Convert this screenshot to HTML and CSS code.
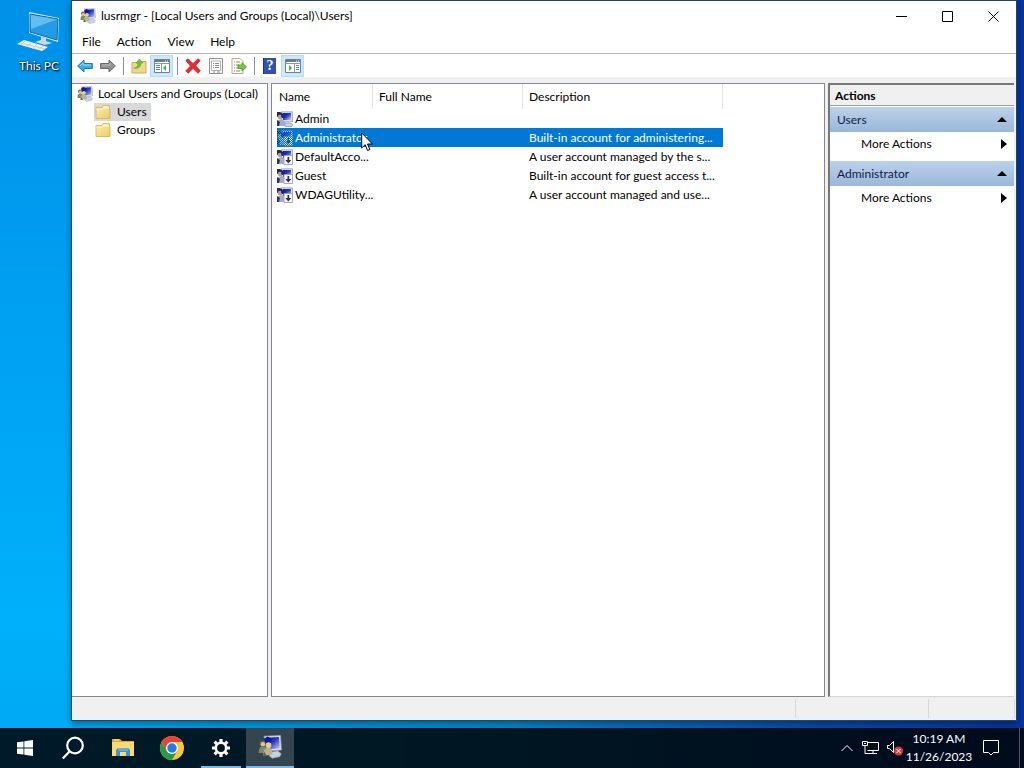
FILE: index.html
```html
<!DOCTYPE html>
<html lang="en">
<head>
    <meta charset="UTF-8">
    <meta name="viewport" content="width=device-width, initial-scale=1.0">
    <title>lusrmgr - [Local Users and Groups (Local)\Users]</title>
    <link rel="stylesheet" href="styles.css">
</head>
<body>
    <!-- shared icons -->
    <svg class="sprite" aria-hidden="true">
        <linearGradient id="screenBlue" x1="0" y1="0" x2="1" y2="1">
            <stop offset="0" stop-color="#0713a8"/>
            <stop offset="0.45" stop-color="#2638b8"/>
            <stop offset="1" stop-color="#c9d5f6"/>
        </linearGradient>
        <linearGradient id="folderFill" x1="0" y1="0" x2="1" y2="1">
            <stop offset="0" stop-color="#fff0ae"/>
            <stop offset="1" stop-color="#edc964"/>
        </linearGradient>
        <pattern id="dither" width="2" height="2" patternUnits="userSpaceOnUse">
            <path d="M0 0h1v1H0zM1 1h1v1H1z" fill="#0078d7"/>
        </pattern>
        <symbol id="users" viewBox="0 0 16 16">
            <path d="M4 .8l11-.4.600 9.600-8.600.6z" fill="#dfe2ee" stroke="#a0a5b8" stroke-width=".5"/>
            <path d="M5 1.800l9-.5.600 7.500-7.600.8z" fill="url(#screenBlue)"/>
            <path d="M8.500 11.500l4.500-1 2.500 2-1 2-5 1-2-1.500z" fill="#c7d3e2" stroke="#8f9bb0" stroke-width=".4"/>
            <path d="M4 2.500L6.500 1 9 2.500 8.500 6H5z" fill="#1119a0"/>
            <circle cx="3" cy="5.500" r="1.900" fill="#6b6440"/>
            <circle cx="3.300" cy="6.200" r="1.500" fill="#dcc592"/>
            <path d="M.5 12c0-3.500 1-4.500 3-4.500s3 1.500 3 4.500z" fill="#7f8a62"/>
            <circle cx="7" cy="6.800" r="1.900" fill="#e3cc98"/>
            <path d="M3.500 14c0-4 1.200-5.500 3.500-5.500 2 0 2.800 1.800 2.500 4.500z" fill="#b9b489"/>
            <path d="M4 11l2 3H3.500z" fill="#59617b"/>
        </symbol>
        <symbol id="user" viewBox="0 0 16 16">
            <path d="M4.500.8H15.500v10h-11z" fill="#dcdff0" stroke="#8c91aa" stroke-width=".7"/>
            <path d="M6 2h8v7H6z" fill="url(#screenBlue)"/>
            <path d="M8 12h5l3 1.500-1 2H8z" fill="#cbd3e6" stroke="#7e86a0" stroke-width=".6"/>
            <path d="M0 1h3l2 1 2 2-1 3-2-2-4 1z" fill="#252755"/>
            <circle cx="3" cy="6" r="2.300" fill="#b5a27f"/>
            <circle cx="6" cy="5" r="2" fill="#1b2494"/>
            <path d="M0 15v-4c1-3 6-4 8 0v4z" fill="#a6abc9"/>
            <path d="M0 9l3 2-1 4H0z" fill="#32354d"/>
        </symbol>
        <symbol id="user-disabled" viewBox="0 0 16 16">
            <use href="#user"/>
            <path d="M7 6.500h8.500v9H7z" fill="#f8f8fc" stroke="#9a9cb4" stroke-width=".8"/>
            <path d="M10.500 8h1.700v3h2.100l-3 3.500-3-3.500h2.200z" fill="#303050"/>
        </symbol>
        <symbol id="folder" viewBox="0 0 16 16">
            <path d="M1 3.500h6l1-2h6.500v3.500H15v9.500H1z" fill="url(#folderFill)" stroke="#d4ae55" stroke-width=".8"/>
            <path d="M8 3.200h5.500" stroke="#fffbe0"/>
            <path d="M1.500 5.200h6l1-1h6" stroke="#fff9d7" stroke-width=".7" fill="none"/>
        </symbol>
    </svg>

    <div class="desktop">
        <main class="workspace">
            <div class="shortcuts">
                <a class="shortcut" href="#">
                    <svg width="44" height="44" viewBox="0 0 44 44" aria-hidden="true">
                        <path d="M12 3l30 6-1 24-29-9z" fill="#d5eefb"/>
                        <path d="M13 5l28 5-1 21-27-8z" fill="#249be6"/>
                        <path d="M13 5l28 5-27 10z" fill="#64bdf1"/>
                        <path d="M13 5l28 5-1 21-27-8z" fill="none" stroke="#17648f"/>
                        <path d="M24 28l5 1v3l6 2-7 2-10-3 6-2z" fill="#cbd8df"/>
                        <path d="M7 31l24 7-6 4L0 35z" fill="#eef2f4"/>
                        <path d="M4 34l24 6M8 32l-4 4M14 34l-5 4M20 35l-5 5M26 37l-5 4" stroke="#bac5cc" stroke-width=".8"/>
                    </svg>
                    <span>This PC</span>
                </a>
            </div>

            <section class="window">
                <header class="titlebar">
                    <svg class="icon" aria-hidden="true"><use href="#users"/></svg>
                    <h1>lusrmgr - [Local Users and Groups (Local)\Users]</h1>
                    <div class="caption-buttons">
                        <button aria-label="Minimize"><svg width="11" height="11"><path d="M0 5.500h11"/></svg></button>
                        <button aria-label="Maximize"><svg width="11" height="11"><path d="M.5.5h10v10H.5z"/></svg></button>
                        <button aria-label="Close"><svg width="11" height="11"><path d="M.5.5l10 10M10.500.5l-10 10"/></svg></button>
                    </div>
                </header>

                <nav class="menubar">
                    <button>File</button>
                    <button>Action</button>
                    <button>View</button>
                    <button>Help</button>
                </nav>

                <div class="toolbar">
                    <button aria-label="Back">
                        <svg class="icon" viewBox="0 0 16 16"><path d="M.6 8L7 2v3.500h8.400v5H7V14z" fill="#35aee6" stroke="#247bab"/><path d="M3 8l3-3v2h8" fill="none" stroke="#9bdcf8"/></svg>
                    </button>
                    <button aria-label="Forward">
                        <svg class="icon" viewBox="0 0 16 16"><path d="M15.400 8L9 2v3.500H.6v5H9V14z" fill="#929292" stroke="#686868"/><path d="M2 7h8V5" fill="none" stroke="#bdbdbd"/></svg>
                    </button>
                    <span class="separator"></span>
                    <button aria-label="Up one level">
                        <svg class="icon" viewBox="0 0 16 16"><path d="M1 4.500h8l1-1h5v11.500H1z" fill="#edd98a" stroke="#c9ab58"/><path d="M3 10c3 0 4-2 4-5H5l3.500-4L12 5h-2c0 4-3 6-7 5z" fill="#6cc832" stroke="#549a32" stroke-width=".6"/></svg>
                    </button>
                    <button class="pressed" aria-label="Show/Hide Console Tree" aria-pressed="true">
                        <svg class="icon" viewBox="0 0 16 16"><path d="M.5 1.500h15v13H.5z" fill="#fff" stroke="#72808e"/><path d="M1 2h14v2H1z" fill="#687c91"/><path d="M.5 5.500h15M7.500 6v8" stroke="#8a98a5"/><path d="M2 7.500h4M2 9.500h4M2 11.500h4" stroke="#4888bb"/><path d="M12 7v6L9 10z" fill="#55ac29"/><path d="M11 3h1M13 3h1" stroke="#fff"/></svg>
                    </button>
                    <span class="separator"></span>
                    <button aria-label="Delete">
                        <svg class="icon" viewBox="0 0 16 16"><path d="M.8 2.500L3 .8 8 5.500l5-4.700 2.200 1.700-4.600 5.300 4.700 5L13 15.300l-5-4.700-4.800 4.600L.7 13l4.700-5z" fill="#e42c31" stroke="#b22127" stroke-width=".7"/></svg>
                    </button>
                    <button aria-label="Properties">
                        <svg class="icon" viewBox="0 0 16 16"><path d="M1.500.5h13v15h-13z" fill="#f8f8f8" stroke="#909090"/><path d="M3.500 3h9v9.500h-9z" fill="#fff" stroke="#b0b0b0"/><path d="M5 5.500h1M7 5.500h4M5 7.500h1M7 7.500h4M5 9.500h1M7 9.500h4M5 14h2M9 14h3" stroke="#888"/></svg>
                    </button>
                    <button aria-label="Export List">
                        <svg class="icon" viewBox="0 0 16 16"><path d="M1 .5h8l3 3v12H1z" fill="#fffdf0" stroke="#b0ae98"/><path d="M3 4h1M5 4h4M3 7h1M5 7h3M3 10h1M5 10h3M3 13h1M5 13h4" stroke="#888"/><path d="M7 7h4V4.500L15.500 9 11 13v-2.500H7z" fill="#76cc38" stroke="#4b962d" stroke-width=".8"/></svg>
                    </button>
                    <span class="separator"></span>
                    <button class="help" aria-label="Help"><span>?</span></button>
                    <button class="pressed" aria-label="Show/Hide Action Pane" aria-pressed="true">
                        <svg class="icon" viewBox="0 0 16 16"><path d="M.5 1.500h15v13H.5z" fill="#fff" stroke="#72808e"/><path d="M1 2h14v2H1z" fill="#687c91"/><path d="M.5 5.500h15M9.500 6v8" stroke="#8a98a5"/><path d="M11 7.500h3M11 9.500h3M11 11.500h3" stroke="#4888bb"/><path d="M4 7v6l3-3z" fill="#55ac29"/><path d="M11 3h1M13 3h1" stroke="#fff"/></svg>
                    </button>
                </div>

                <div class="panes">
                    <nav class="tree">
                        <a class="root" href="#"><svg class="icon" aria-hidden="true"><use href="#users"/></svg><span>Local Users and Groups (Local)</span></a>
                        <a class="child selected" href="#"><svg class="icon" aria-hidden="true"><use href="#folder"/></svg><span>Users</span></a>
                        <a class="child" href="#"><svg class="icon" aria-hidden="true"><use href="#folder"/></svg><span>Groups</span></a>
                    </nav>

                    <div class="list">
                        <table>
                            <colgroup><col class="col-name"><col class="col-full"><col class="col-desc"></colgroup>
                            <thead>
                                <tr><th>Name</th><th>Full Name</th><th>Description</th></tr>
                            </thead>
                            <tbody>
                                <tr>
                                    <td><div class="user"><svg class="icon" aria-hidden="true"><use href="#user"/></svg><span>Admin</span></div></td>
                                    <td></td><td></td>
                                </tr>
                                <tr class="selected">
                                    <td><div class="user"><svg class="icon" aria-hidden="true"><use href="#user-disabled"/><path d="M0 0h16v16H0z" fill="url(#dither)"/></svg><span>Administrator</span></div></td>
                                    <td></td><td>Built-in account for administering...</td>
                                </tr>
                                <tr>
                                    <td><div class="user"><svg class="icon" aria-hidden="true"><use href="#user-disabled"/></svg><span>DefaultAcco...</span></div></td>
                                    <td></td><td>A user account managed by the s...</td>
                                </tr>
                                <tr>
                                    <td><div class="user"><svg class="icon" aria-hidden="true"><use href="#user-disabled"/></svg><span>Guest</span></div></td>
                                    <td></td><td>Built-in account for guest access t...</td>
                                </tr>
                                <tr>
                                    <td><div class="user"><svg class="icon" aria-hidden="true"><use href="#user-disabled"/></svg><span>WDAGUtility...</span></div></td>
                                    <td></td><td>A user account managed and use...</td>
                                </tr>
                            </tbody>
                        </table>
                    </div>

                    <aside class="actions">
                        <h2>Actions</h2>
                        <div class="action-group">
                            <button class="group-title">Users<svg width="10" height="5"><path d="M0 5l5-5 5 5z"/></svg></button>
                            <button class="more">More Actions<svg width="6" height="10"><path d="M0 0l6 5-6 5z"/></svg></button>
                        </div>
                        <div class="action-group">
                            <button class="group-title">Administrator<svg width="10" height="5"><path d="M0 5l5-5 5 5z"/></svg></button>
                            <button class="more">More Actions<svg width="6" height="10"><path d="M0 0l6 5-6 5z"/></svg></button>
                        </div>
                    </aside>
                </div>

                <footer class="statusbar"><span></span><span></span><span></span></footer>
            </section>
        </main>

        <footer class="taskbar">
            <div class="apps">
                <button aria-label="Start">
                    <svg width="16" height="16" viewBox="0 0 16 16" fill="#fff"><path d="M0 2.300L6.500 1.400v6.200H0zM7.300 1.300L16 0v7.600H7.300zM0 8.400h6.500v6.200L0 13.700zM7.300 8.400H16V16l-8.700-1.300z"/></svg>
                </button>
                <button aria-label="Search">
                    <svg width="24" height="24" viewBox="0 0 24 24" fill="none" stroke="#fff" stroke-width="2.200"><circle cx="13" cy="9.500" r="7.800"/><path d="M7.500 15.500L.8 22.500"/></svg>
                </button>
                <button aria-label="File Explorer">
                    <svg width="22" height="20" viewBox="0 0 22 20"><path d="M0 1h8l2 2h12v15H0z" fill="#e8a91e"/><path d="M0 4h22v14H0z" fill="#ffd96f"/><path d="M2 2h5" stroke="#fff2b4"/><path d="M4 18v-6l2-2h10l2 2v6h-4v-4H8v4z" fill="#3793c9"/><path d="M6 10h10v3H6z" fill="#5bb1dd"/></svg>
                </button>
                <button aria-label="Google Chrome">
                    <svg width="24" height="24" viewBox="0 0 24 24"><circle cx="12" cy="12" r="12" fill="#fcc934"/><path d="M12 6h10.390A12 12 0 0 0 1.610 6l5.200 9z" fill="#ea4335"/><path d="M1.610 6A12 12 0 0 0 12 24l5.200-9L12 18l-5.200-3z" fill="#269b4b"/><circle cx="12" cy="12" r="6" fill="#fff"/><circle cx="12" cy="12" r="4.700" fill="#2878e8"/></svg>
                </button>
                <button class="running" aria-label="Settings">
                    <svg width="20" height="20" viewBox="0 0 20 20" fill="none" stroke="#fff"><circle cx="10" cy="10" r="5.200" stroke-width="2.600"/><path d="M10 1v3M10 16v3M1 10h3M16 10h3M3.640 3.640l2.120 2.120M14.240 14.240l2.120 2.120M3.640 16.360l2.120-2.120M14.240 5.760l2.120-2.120" stroke-width="3.200"/></svg>
                </button>
                <button class="active" aria-label="Local Users and Groups">
                    <svg width="24" height="24"><use href="#users"/></svg>
                </button>
            </div>
            <div class="tray">
                <button aria-label="Show hidden icons"><svg width="12" height="8"><path d="M.5 7L6 1.500 11.500 7"/></svg></button>
                <button aria-label="Network"><svg width="18" height="16"><path d="M5.500 2.500h11v8h-11M.5 1.500h5v4h-5zM3 5.500v8h8M11 10.500v3M7 13.500h8M2 3.500h2"/></svg></button>
                <button aria-label="Volume muted"><svg width="18" height="18"><path d="M1.500 6.500h2l4-4v11l-4-4h-2z"/><circle class="mute" cx="12.500" cy="12" r="4.500"/><path d="M10.500 10l4 4M14.500 10l-4 4"/></svg></button>
                <button class="clock"><time datetime="2023-11-26T10:19">10:19 AM<br>11/26/2023</time></button>
                <button class="notifications" aria-label="Notifications"><svg width="18" height="18"><path d="M1.500 1.500h15v12h-5L9 16l-2.500-2.500h-5z"/></svg></button>
                <button class="show-desktop" aria-label="Show desktop"></button>
            </div>
        </footer>

        <svg class="cursor" width="13" height="20" viewBox="0 0 13 20" aria-hidden="true"><path d="M.7 1v15l3.500-3.300 2.300 5.800 2.400-1-2.400-5.500h5z" fill="#fff" stroke="#000"/></svg>
    </div>
</body>
</html>
```
FILE: styles.css
```css
* {
    margin: 0;
    padding: 0;
    box-sizing: border-box;
}

body {
    font-family: 'Segoe UI', Lato, 'Open Sans', sans-serif;
    font-size: 12px;
    line-height: 18px;
    color: #000;
}

button {
    font: inherit;
    color: inherit;
    background: none;
    border: none;
}

a {
    color: inherit;
    text-decoration: none;
}

svg {
    display: block;
    flex: none;
}

.sprite {
    position: absolute;
    width: 0;
    height: 0;
}

.icon {
    width: 16px;
    height: 16px;
}

.desktop {
    position: relative;
    height: 100vh;
    display: flex;
    flex-direction: column;
    background: linear-gradient(90deg, #00a4f4 0%, #0098dc 20%, #0082c4 50%, #0648a4 80%, #05339b 100%);
    overflow: hidden;
}

.workspace {
    flex: 1;
    min-height: 0;
    display: flex;
    padding: 1px 8px 8px 0;
}

/* Desktop shortcuts */
.shortcuts {
    width: 72px;
    flex: none;
    margin: -1px 0 -8px;
    padding-top: 9px;
    background: linear-gradient(180deg, #0090e8 0%, #009bf0 30%, #00b0fa 85%, #00a9f3 100%);
}

.shortcut {
    display: flex;
    flex-direction: column;
    align-items: center;
    padding-left: 6px;
    gap: 4px;
    color: #fff;
    text-shadow: 1px 1px 2px #000, 0 0 2px #000;
}

/* Window */
.window {
    flex: 1;
    min-width: 0;
    display: flex;
    flex-direction: column;
    background: #f0f0f0;
    box-shadow: 0 0 0 1px #25465e, 0 2px 7px rgba(0, 0, 0, 0.45);
}

.titlebar {
    height: 30px;
    display: flex;
    align-items: center;
    gap: 5px;
    padding-left: 8px;
    background: #fff;
}

.titlebar h1 {
    flex: 1;
    font-size: 12px;
    font-weight: 400;
}

.caption-buttons {
    display: flex;
    height: 100%;
}

.caption-buttons button {
    width: 46px;
    display: flex;
    align-items: center;
    justify-content: center;
}

.caption-buttons svg {
    fill: none;
    stroke: #000;
}

.menubar {
    height: 22px;
    display: flex;
    padding-left: 2px;
    background: #fff;
}

.menubar button {
    padding: 0 8px;
}

.toolbar {
    display: flex;
    align-items: center;
    height: 24px;
    padding-left: 1px;
    background: #fff;
    border-top: 1px solid #b4b4b4;
}

.toolbar button {
    width: 23px;
    height: 22px;
    display: flex;
    align-items: center;
    justify-content: center;
    border: 1px solid transparent;
}

.toolbar .pressed {
    background: #cce8ff;
    border-color: #b5dcf8;
}

.separator {
    width: 8px;
    height: 18px;
    background: linear-gradient(#8c8c8c, #8c8c8c) center / 1px 100% no-repeat;
}

.help span {
    width: 13px;
    height: 16px;
    line-height: 16px;
    font-family: 'Liberation Serif', serif;
    font-size: 14px;
    font-weight: 700;
    color: #fff;
    background: #334faf;
    border-left: 1px solid #20337b;
}

/* Panes */
.panes {
    flex: 1;
    min-height: 0;
    display: grid;
    grid-template-columns: 196px 1fr 186px;
    gap: 3px;
    padding: 6px 2px 0 0;
}

.tree,
.list {
    background: #fff;
    border: 1px solid #828790;
}

.tree {
    display: flex;
    flex-direction: column;
    align-items: flex-start;
    padding-top: 1px;
    border-left: none;
    white-space: nowrap;
    overflow: hidden;
}

.tree a {
    display: flex;
    align-items: center;
    gap: 5px;
    padding-right: 4px;
}

.tree .root {
    margin-left: 5px;
}

.tree .child {
    margin-left: 22px;
    padding-left: 1px;
    gap: 6px;
}

.tree .selected {
    background: #d9d9d9;
}

.list {
    overflow: hidden;
}

table {
    table-layout: fixed;
    width: 451px;
    border-spacing: 0;
}

.col-name {
    width: 101px;
}

.col-full {
    width: 150px;
}

.col-desc {
    width: 200px;
}

th {
    height: 25px;
    padding: 0 6px;
    text-align: left;
    font-weight: 400;
    border-right: 1px solid #e5e5e5;
}

th:first-child {
    padding-left: 7px;
}

td {
    height: 19px;
    padding: 0 0 0 6px;
    white-space: nowrap;
    overflow: hidden;
}

td:first-child {
    padding-left: 5px;
}

.user {
    display: flex;
    align-items: center;
    gap: 2px;
}

.list .selected td {
    color: #fff;
    background: #0078d7;
}

.list .selected td:first-child {
    background: linear-gradient(90deg, #fff 5px, #0078d7 5px);
}

/* Actions pane */
.actions {
    background: #fff;
    border: 2px solid #777;
    border-right: none;
    border-bottom: 1px solid #d5d5d5;
}

.actions h2 {
    height: 21px;
    padding-left: 5px;
    line-height: 21px;
    font-size: 12px;
    font-weight: 700;
    background: #f0f0f0;
    border-bottom: 1px solid #a0a0a0;
}

.action-group {
    padding: 1px 0 4px;
}

.action-group button {
    width: 100%;
    display: flex;
    align-items: center;
    justify-content: space-between;
    height: 25px;
    padding: 0 7px;
}

.action-group .group-title {
    color: #0a1e46;
    background: linear-gradient(#bcd2ec, #9bb7d8);
}

.action-group .more {
    height: 24px;
    padding-left: 31px;
}

.action-group svg {
    fill: #000;
}

.statusbar {
    height: 23px;
    display: grid;
    grid-template-columns: 1fr 133px 86px;
    padding: 2px 1px 2px 0;
}

.statusbar span {
    border-right: 1px solid #d7d7d7;
}

/* Taskbar */
.taskbar {
    position: relative;
    height: 40px;
    display: flex;
    justify-content: space-between;
    color: #fff;
    background: linear-gradient(90deg, #001a29 0%, #001622 50%, #000a1d 100%);
}

.apps {
    display: flex;
    gap: 1px;
    padding-left: 1px;
}

.apps button {
    width: 48px;
    display: flex;
    align-items: center;
    justify-content: center;
}

.apps .running {
    background: linear-gradient(#76b9ed, #76b9ed) bottom / 40px 2px no-repeat;
}

.apps .active {
    background: #34454f;
    border-bottom: 2px solid #76b9ed;
}

.tray {
    display: flex;
}

.tray button {
    width: 24px;
    display: flex;
    align-items: center;
    justify-content: center;
}

.tray svg {
    fill: none;
    stroke: #fff;
}

.tray .mute {
    fill: #d83b3b;
    stroke: none;
}

.tray .clock {
    width: 64px;
    text-align: center;
}

.tray .notifications {
    width: 40px;
}

.tray .show-desktop {
    width: 5px;
    margin-left: 8px;
    border-left: 1px solid #4d5663;
}

.cursor {
    position: absolute;
    left: 361px;
    top: 132px;
}
```
